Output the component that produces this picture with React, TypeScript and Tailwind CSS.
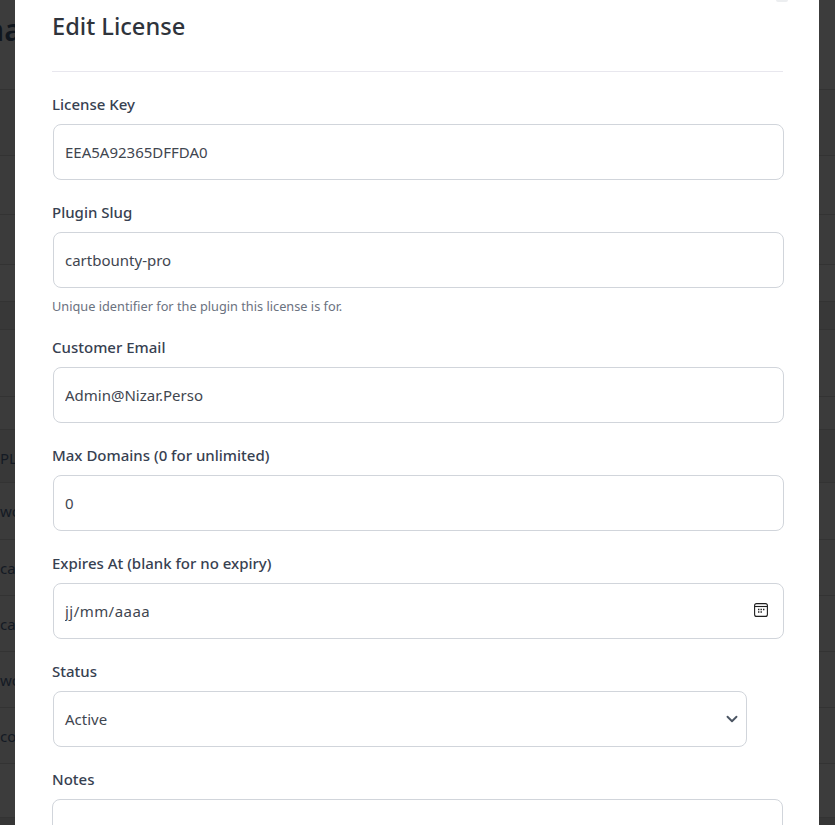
import { ChevronDown } from 'lucide-react';

const font = 'font-["Noto_Sans","Open_Sans",sans-serif]';

const backdropRows = [
  { h: 'h-[90px]', bg: 'bg-[#3c3c3c]', text: '' },
  { h: 'h-[66px]', bg: 'bg-[#3a3a3a]', text: '' },
  { h: 'h-[59px]', bg: 'bg-[#3b3b3b]', text: '' },
  { h: 'h-[50px]', bg: 'bg-[#3b3b3b]', text: '' },
  { h: 'h-[37px]', bg: 'bg-[#3c3c3c]', text: '' },
  { h: 'h-[28px]', bg: 'bg-[#383838]', text: '' },
  { h: 'h-[67px]', bg: 'bg-[#3b3b3b]', text: '' },
  { h: 'h-[33px]', bg: 'bg-[#3b3b3b]', text: '' },
  { h: 'h-[53px]', bg: 'bg-[#383838]', text: 'PL' },
  { h: 'h-[57px]', bg: 'bg-[#3b3b3b]', text: 'wo' },
  { h: 'h-[56px]', bg: 'bg-[#3b3b3b]', text: 'car' },
  { h: 'h-[56px]', bg: 'bg-[#3b3b3b]', text: 'car' },
  { h: 'h-[56px]', bg: 'bg-[#3b3b3b]', text: 'wo' },
  { h: 'h-[56px]', bg: 'bg-[#3b3b3b]', text: 'co' },
  { h: 'h-[54px]', bg: 'bg-[#3c3c3c]', text: '' },
];

function Label({ children }: { children: string }) {
  return <label className="mb-[9px] block h-[22px] text-[15px] font-medium leading-[22px] text-[#374151]">{children}</label>;
}

function TextField({ value, wide }: { value: string; wide?: boolean }) {
  return (
    <input
      readOnly
      value={value}
      className={`ml-px block h-14 w-[731px] rounded-lg border border-[#d1d5db] bg-white px-[11px] text-[15px] text-[#3f4650] outline-none ${wide ? 'tracking-[0.45px]' : ''}`}
    />
  );
}

export default function App() {
  return (
    <div className={`relative h-[825px] w-[835px] overflow-hidden bg-[#363636] ${font}`}>
      {/* page behind the overlay */}
      <div className="flex flex-col">
        {backdropRows.map((row, idx) => (
          <div key={idx} className={`${row.h} ${row.bg} overflow-hidden border-b border-[#333333] text-[15px] leading-[56px] text-[#141a24]`}>
            {idx === 0 ? <span className="-ml-[15px] block text-[30px] font-semibold leading-[60px] text-[#10161e]">na</span> : row.text}
          </div>
        ))}
      </div>

      {/* modal */}
      <div className="absolute inset-y-0 left-[15px] w-[804px] bg-white pl-[37px]">
        <div className="absolute right-[31px] top-0 h-[2px] w-[12px] rounded-b-full bg-[#eceef0]" />
        <div className="w-[731px]">
          <h2 className="h-[72px] border-b border-[#e8e7ee] text-[23.6px] font-medium leading-[52px] text-[#2f343c]">Edit License</h2>

          <div className="pt-[21px]">
            <Label>License Key</Label>
            <TextField value="EEA5A92365DFFDA0" />
          </div>

          <div className="pt-[21px]">
            <Label>Plugin Slug</Label>
            <TextField value="cartbounty-pro" />
            <p className="mt-2 h-5 text-[12.75px] leading-5 text-[#6b7280]">Unique identifier for the plugin this license is for.</p>
          </div>

          <div className="pt-5">
            <Label>Customer Email</Label>
            <TextField value="Admin@Nizar.Perso" />
          </div>

          <div className="pt-[21px]">
            <Label>Max Domains (0 for unlimited)</Label>
            <TextField value="0" />
          </div>

          <div className="pt-[21px]">
            <Label>Expires At (blank for no expiry)</Label>
            <div className="relative">
              <TextField value="jj/mm/aaaa" wide />
              <svg viewBox="0 0 14 14" className="absolute right-[15px] top-[20px] h-[14px] w-[14px]" fill="none" stroke="#1f1f1f">
                <rect x="0.6" y="0.6" width="12.8" height="12.8" rx="2" strokeWidth="1.1" />
                <path d="M0.6 3.5H13.4" strokeWidth="1.1" />
                <path d="M4 6.5h1.4M6.5 6.5h1.4M9 6.5h1.4M4 9h1.4M6.5 9h1.4" strokeWidth="1.5" />
              </svg>
            </div>
          </div>

          <div className="pt-[21px]">
            <Label>Status</Label>
            <div className="ml-px flex h-14 w-[694px] items-center justify-between rounded-lg border border-[#d1d5db] bg-white pl-[11px] pr-[5px] text-[15px] text-[#3f4650]">
              <span>Active</span>
              <ChevronDown className="h-[18px] w-[18px] text-[#4b5563]" strokeWidth={2.5} />
            </div>
          </div>

          <div className="pt-[21px]">
            <Label>Notes</Label>
            <div className="h-20 w-[731px] rounded-lg border border-[#d1d5db] bg-white" />
          </div>
        </div>
      </div>
    </div>
  );
}
